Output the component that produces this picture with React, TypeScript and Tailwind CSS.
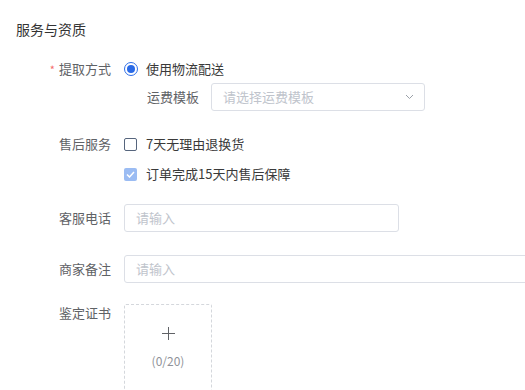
import React from "react";

const font = { fontFamily: '"Noto Sans CJK SC", "Noto Sans", sans-serif' };

function Label({ children, required }: { children: React.ReactNode; required?: boolean }) {
  return (
    <div className="w-[124px] shrink-0 pr-[13px] text-right text-[13px] text-[#5f6266] leading-[20px]">
      {required && <span className="text-[#f56c6c] mr-[4px] text-[11px]">*</span>}
      {children}
    </div>
  );
}

export default function App() {
  return (
    <div className="w-[525px] h-[390px] overflow-hidden bg-white relative" style={font}>
      <div className="pl-[16px] pt-[19px] text-[14px] leading-[20px] text-[#333333]">服务与资质</div>

      {/* 提取方式 */}
      <div className="flex items-center mt-[20px] h-[20px]">
        <Label required>提取方式</Label>
        <div className="flex items-center">
          <span className="w-[14px] h-[14px] rounded-full border border-[#2f6fe8] flex items-center justify-center">
            <span className="w-[8px] h-[8px] rounded-full bg-[#2a6ae6]" />
          </span>
          <span className="ml-[8px] text-[13px] text-[#3a3a3a]">使用物流配送</span>
        </div>
      </div>

      {/* 运费模板 */}
      <div className="flex items-center mt-[4px] pl-[147px]">
        <span className="text-[13px] text-[#5f6266] w-[64px]">运费模板</span>
        <div className="w-[214px] h-[28px] border border-[#dcdfe6] rounded-[3px] flex items-center justify-between pl-[11px] pr-[10px]">
          <span className="text-[13px] text-[#c0c4cc]">请选择运费模板</span>
          <svg width="9" height="6" viewBox="0 0 9 6" fill="none">
            <path d="M1 1L4.5 4.5L8 1" stroke="#9aa0a8" strokeWidth="1" />
          </svg>
        </div>
      </div>

      {/* 售后服务 */}
      <div className="flex items-center mt-[23px] h-[20px]">
        <Label>售后服务</Label>
        <div className="flex items-center">
          <span className="w-[13px] h-[13px] border border-[#56657d] rounded-[2px]" />
          <span className="ml-[9px] text-[13px] text-[#3a3a3a]">7天无理由退换货</span>
        </div>
      </div>
      <div className="flex items-center mt-[10px] h-[20px] pl-[124px]">
        <span className="w-[13px] h-[13px] rounded-[2px] bg-[#9bbcf3] flex items-center justify-center">
          <svg width="9" height="7" viewBox="0 0 9 7" fill="none">
            <path d="M1 3.5L3.5 6L8 1" stroke="white" strokeWidth="1.5" />
          </svg>
        </span>
        <span className="ml-[9px] text-[13px] text-[#3a3a3a]">订单完成15天内售后保障</span>
      </div>

      {/* 客服电话 */}
      <div className="flex items-center mt-[20px]">
        <Label>客服电话</Label>
        <div className="w-[275px] h-[28px] border border-[#dcdfe6] rounded-[3px] flex items-center pl-[11px]">
          <span className="text-[13px] text-[#c0c4cc]">请输入</span>
        </div>
      </div>

      {/* 商家备注 */}
      <div className="flex items-center mt-[23px]">
        <Label>商家备注</Label>
        <div className="w-[430px] shrink-0 h-[28px] border border-[#dcdfe6] rounded-[3px] flex items-center pl-[11px]">
          <span className="text-[13px] text-[#c0c4cc]">请输入</span>
        </div>
      </div>

      {/* 鉴定证书 */}
      <div className="flex items-start mt-[21px]">
        <div className="-mt-[1px]">
          <Label>鉴定证书</Label>
        </div>
        <div className="w-[88px] h-[100px] border border-dashed border-[#d4d7dc] rounded-[2px] flex flex-col items-center pt-[22px]">
          <svg width="13" height="13" viewBox="0 0 13 13" fill="none">
            <path d="M6.5 0V13M0 6.5H13" stroke="#606266" strokeWidth="1" />
          </svg>
          <span className="mt-[13px] text-[12px] leading-[16px] text-[#909399]">(0/20)</span>
        </div>
      </div>
    </div>
  );
}
